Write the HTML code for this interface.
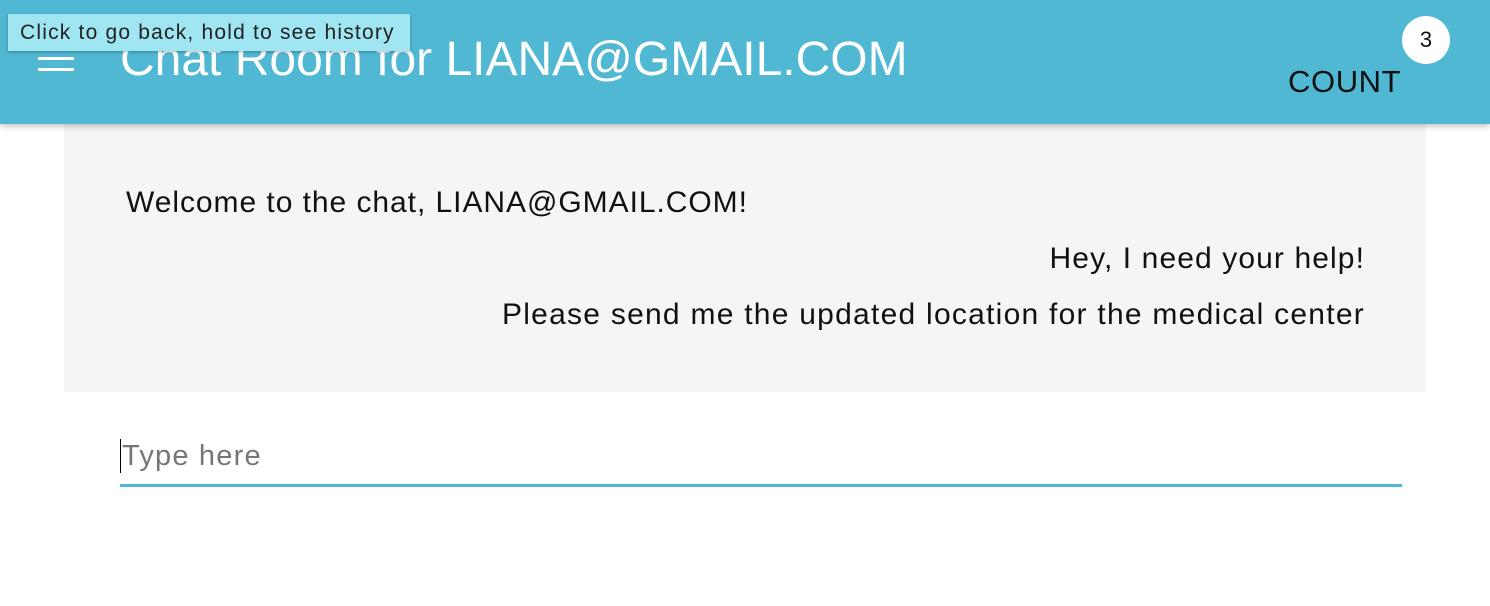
<!DOCTYPE html>
<html><head><style>
body{margin:0;width:1490px;height:606px;background:#fff;font-family:"Liberation Sans",sans-serif;position:relative;overflow:hidden}
.bar{position:absolute;left:0;top:0;width:1490px;height:124px;background:#50b8d2;box-shadow:0 2px 6px rgba(0,0,0,.25);z-index:2}
.ham{position:absolute;left:38px;width:36px;height:3px;background:#fff}
.title{position:absolute;left:120px;top:32px;font-size:48px;color:#fff;white-space:nowrap}
.count{position:absolute;left:1288px;top:64px;font-size:31px;color:#111;letter-spacing:.6px}
.badge{position:absolute;left:1402px;top:16px;width:48px;height:48px;border-radius:50%;background:#fff;text-align:center;line-height:48px;font-size:22px;color:#111}
.tip{position:absolute;left:8px;top:14px;width:402px;height:37px;background:#a0e6f2;box-shadow:0 1px 3px rgba(0,0,0,.3);font-size:21px;color:#222;line-height:37px;padding-left:12px;box-sizing:border-box;z-index:3;letter-spacing:1.2px;white-space:nowrap}
.panel{position:absolute;left:64px;top:124px;width:1362px;height:268px;background:#f5f5f5}
.m{position:absolute;font-size:30px;color:#111;white-space:nowrap;letter-spacing:1.1px}
.input{position:absolute;left:120px;top:436px;width:1282px;height:48px;border-bottom:3px solid #50b8d2}
.ph{position:absolute;left:2px;top:4px;font-size:29px;color:#777;letter-spacing:1.2px}
.caret{position:absolute;left:0;top:3px;width:1px;height:34px;background:#000}
</style></head><body>
<div class="bar">
<div class="ham" style="top:57px"></div><div class="ham" style="top:68px"></div>
<div class="title">Chat Room for LIANA@GMAIL.COM</div>
<div class="count">COUNT</div>
<div class="badge">3</div>
</div>
<div class="tip">Click to go back, hold to see history</div>
<div class="panel">
<div class="m" style="left:62px;top:62px;letter-spacing:.95px">Welcome to the chat, LIANA@GMAIL.COM!</div>
<div class="m" style="right:61px;top:118px">Hey, I need your help!</div>
<div class="m" style="right:61px;top:174px;letter-spacing:1.25px">Please send me the updated location for the medical center</div>
</div>
<div class="input"><div class="caret"></div><div class="ph">Type here</div></div>
</body></html>
